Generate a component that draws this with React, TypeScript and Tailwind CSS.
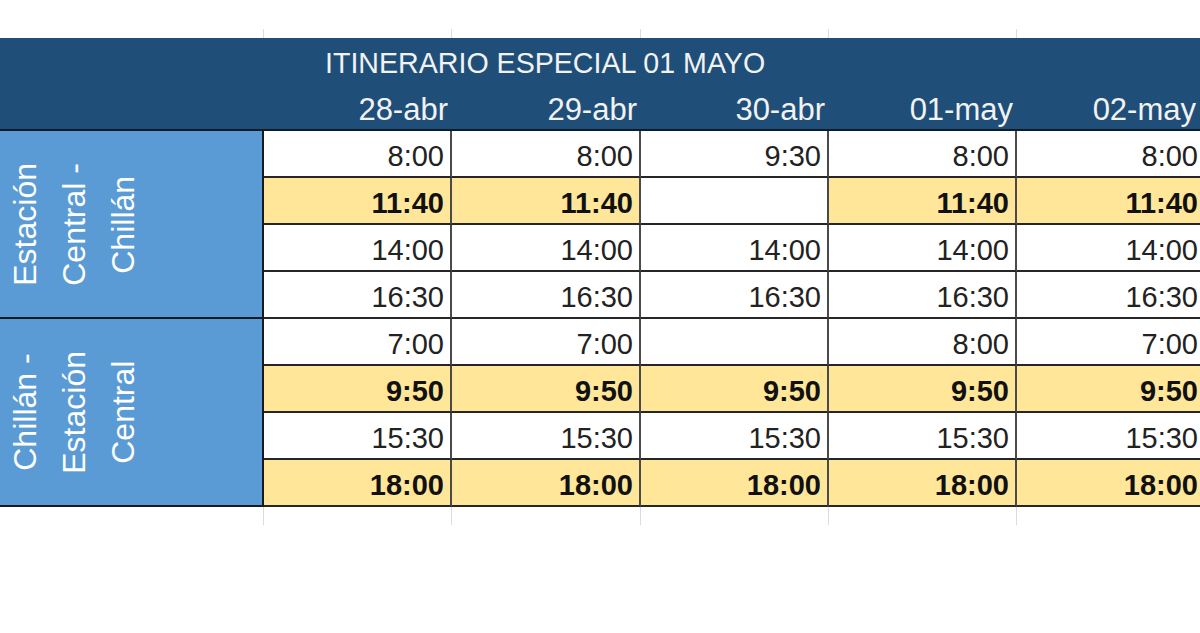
import React from "react";

type Cell = { t: string; y?: boolean };

const dates = ["28-abr", "29-abr", "30-abr", "01-may", "02-may"];

const cols: Cell[][] = [
  [{ t: "8:00" }, { t: "11:40", y: true }, { t: "14:00" }, { t: "16:30" }, { t: "7:00" }, { t: "9:50", y: true }, { t: "15:30" }, { t: "18:00", y: true }],
  [{ t: "8:00" }, { t: "11:40", y: true }, { t: "14:00" }, { t: "16:30" }, { t: "7:00" }, { t: "9:50", y: true }, { t: "15:30" }, { t: "18:00", y: true }],
  [{ t: "9:30" }, { t: "" }, { t: "14:00" }, { t: "16:30" }, { t: "" }, { t: "9:50", y: true }, { t: "15:30" }, { t: "18:00", y: true }],
  [{ t: "8:00" }, { t: "11:40", y: true }, { t: "14:00" }, { t: "16:30" }, { t: "8:00" }, { t: "9:50", y: true }, { t: "15:30" }, { t: "18:00", y: true }],
  [{ t: "8:00" }, { t: "11:40", y: true }, { t: "14:00" }, { t: "16:30" }, { t: "7:00" }, { t: "9:50", y: true }, { t: "15:30" }, { t: "18:00", y: true }],
];

const widths = ["w-[188px]", "w-[189px]", "w-[188px]", "w-[188px]", "w-[189px]"];
const datePad = ["pr-[4px]", "pr-[4px]", "pr-[4px]", "pr-[4px]", "pr-[10px]"];

function GridStrip({ h }: { h: string }) {
  return (
    <div className={`flex ${h}`}>
      <div className="w-[264px] shrink-0 border-r border-[#dcdcdc]" />
      {widths.map((w, i) => (
        <div key={i} className={`${w} shrink-0 border-r border-[#dcdcdc]`} />
      ))}
    </div>
  );
}

function Group({ lines }: { lines: string[] }) {
  return (
    <div className="h-[188px] border-b-2 border-[#1a1a1a] flex items-center justify-start pl-[1px]">
      <div className="[writing-mode:vertical-rl] rotate-180 text-center text-[32px] leading-[49px] text-white">
        {lines.map((l, i) => (
          <div key={i}>{l}</div>
        ))}
      </div>
    </div>
  );
}

export default function App() {
  return (
    <div
      className="w-[1200px] h-[633px] overflow-hidden bg-white"
      style={{ fontFamily: '"Liberation Sans", Arial, sans-serif' }}
    >
      <div className="w-max">
        <div className="h-[29px]" />
        <GridStrip h="h-[9px]" />
        {/* header */}
        <div className="bg-[#1f4e79] border-b-2 border-[#0d1b2a] text-[#f2f2f2]">
          <div className="h-[50px] flex items-center pl-[325px] text-[28.6px] leading-none pt-[1px]">
            ITINERARIO ESPECIAL 01 MAYO
          </div>
          <div className="h-[41px] flex">
            <div className="w-[264px] shrink-0" />
            {dates.map((d, i) => (
              <div
                key={d}
                className={`${widths[i]} ${datePad[i]} shrink-0 flex items-center justify-end pt-[2px] text-[31px] leading-none`}
              >
                {d}
              </div>
            ))}
          </div>
        </div>
        {/* body */}
        <div className="flex">
          <div className="w-[264px] shrink-0 bg-[#5b9bd5] border-r-2 border-[#1a1a1a]">
            <Group lines={["Estación", "Central -", "Chillán"]} />
            <Group lines={["Chillán -", "Estación", "Central"]} />
          </div>
          {cols.map((col, ci) => (
            <div key={ci} className={`${widths[ci]} shrink-0 flex flex-col`}>
              {col.map((c, ri) => (
                <div
                  key={ri}
                  className={`h-[47px] border-b-2 border-r-2 border-b-[#262626] border-r-[#4a4a4a] flex items-center justify-end pr-[6px] pt-[5px] text-[29px] leading-none ${
                    c.y ? "bg-[#ffe699] font-bold text-[#111]" : "bg-white text-[#222]"
                  }`}
                >
                  {c.t}
                </div>
              ))}
            </div>
          ))}
        </div>
        <GridStrip h="h-[18px]" />
      </div>
    </div>
  );
}
